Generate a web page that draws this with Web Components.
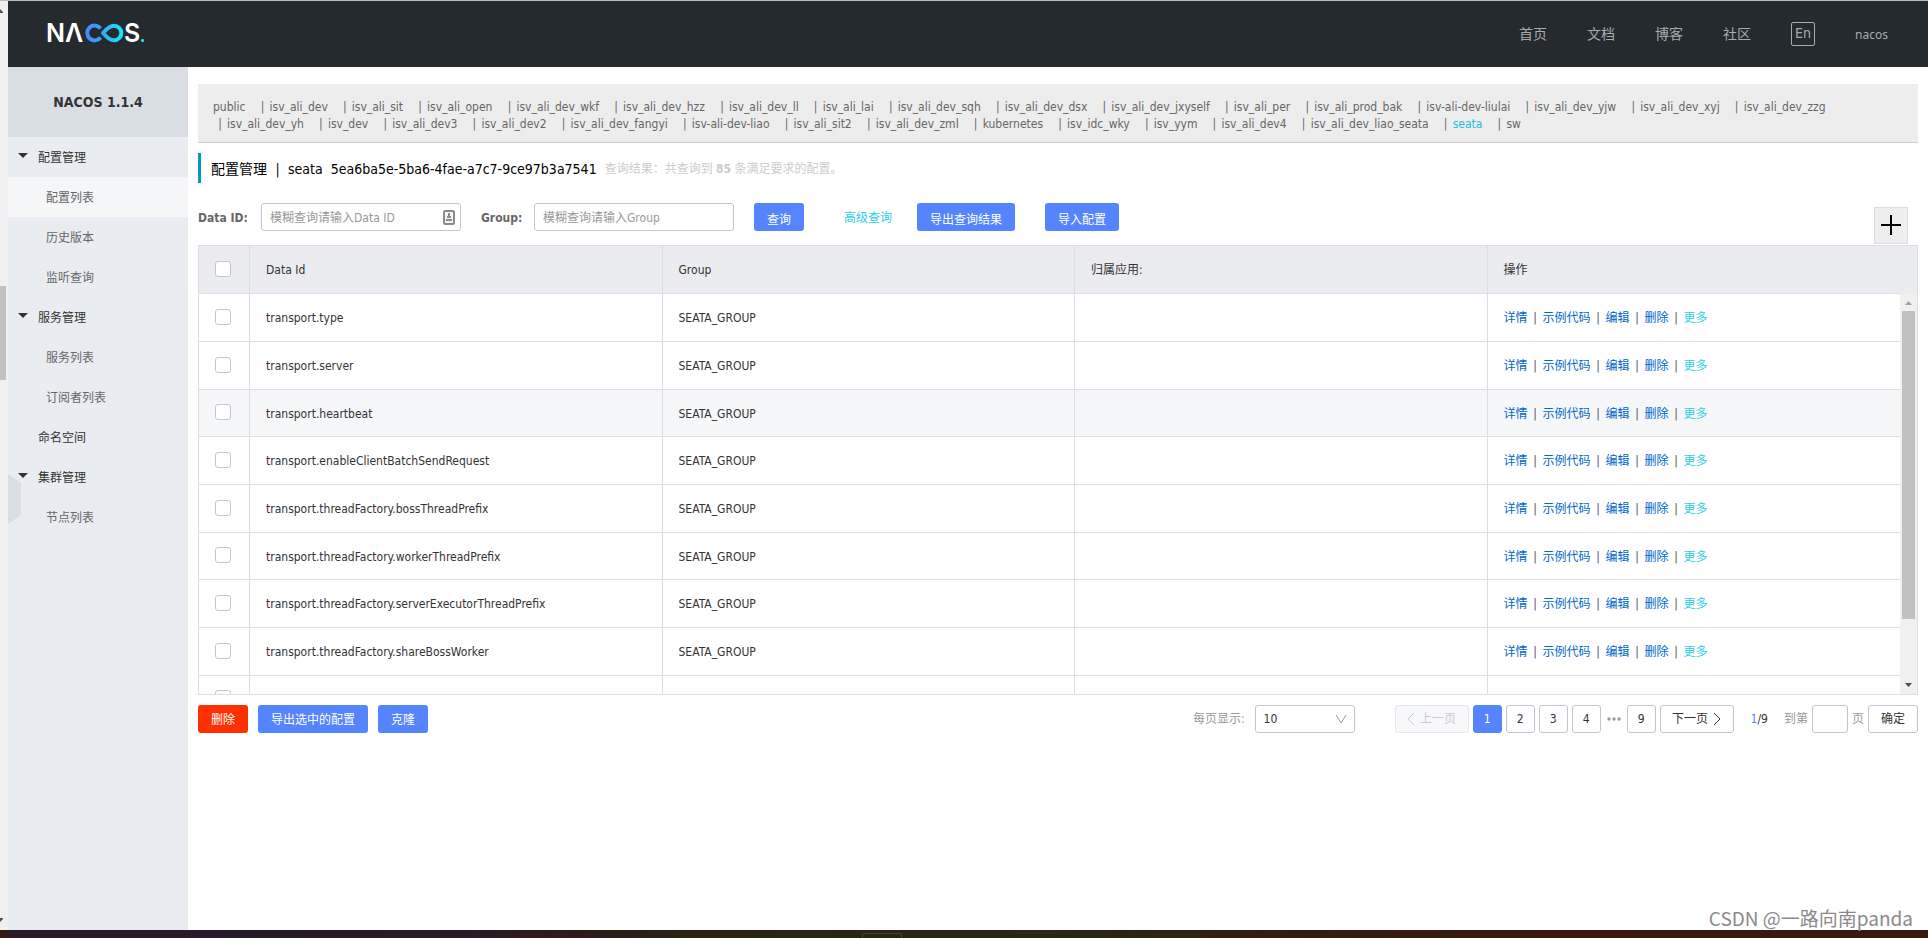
<!DOCTYPE html>
<html lang="zh-CN">
<head>
<meta charset="utf-8">
<title>NACOS</title>
<style>
  html, body { margin: 0; }
  body {
    font-family: "DejaVu Sans Condensed", "Noto Sans CJK SC", sans-serif;
    font-size: 12px;
    line-height: 17px;
    color: #333;
    background: #fff;
  }
</style>
</head>
<body>
<nacos-app>
  <nacos-header slot="header"></nacos-header>
  <nacos-sidebar slot="sidebar" version="NACOS 1.1.4"></nacos-sidebar>
  <nacos-namespaces current="seata"></nacos-namespaces>
  <nacos-title namespace="seata" namespace-id="5ea6ba5e-5ba6-4fae-a7c7-9ce97b3a7541" count="85">配置管理</nacos-title>
  <nacos-search></nacos-search>
  <nacos-config-table></nacos-config-table>
  <nacos-footer>
    <nacos-button kind="warning">删除</nacos-button>
    <nacos-button>导出选中的配置</nacos-button>
    <nacos-button>克隆</nacos-button>
    <nacos-pager slot="pager"></nacos-pager>
  </nacos-footer>
</nacos-app>

<script>
const BASE = `
  *, *::before, *::after { box-sizing: border-box; }
  a { color: inherit; text-decoration: none; }
  button, input, select { font: inherit; color: inherit; margin: 0; }
  ul { list-style: none; margin: 0; padding: 0; }
  svg { display: block; }
`;

class Base extends HTMLElement {
  connectedCallback() {
    if (this.shadowRoot) return;
    this.attachShadow({ mode: 'open' }).innerHTML =
      `<style>${BASE}${this.styles()}</style>${this.render()}`;
  }
  styles() { return ''; }
  render() { return '<slot></slot>'; }
}

customElements.define('nacos-app', class extends Base {
  styles() { return `
    :host { display: flex; flex-direction: column; min-height: 100vh; box-sizing: border-box; border-top: 1px solid #b9bcbc; position: relative; }
    .window { flex: 1; display: grid; grid-template-columns: 8px 1fr; }
    .edge { background: #f0f0f0; display: flex; flex-direction: column; align-items: flex-start; justify-content: space-between; padding: 8px 0; position: relative; }
    .thumb { position: absolute; left: 0; top: 285px; width: 6px; height: 94px; background: #c1c1c1; }
    .page { display: flex; flex-direction: column; }
    .body { flex: 1; display: grid; grid-template-columns: 180px 1fr; }
    main { padding: 17px 10px 0; min-width: 0; }
    .taskbar { height: 8px; background: linear-gradient(90deg, #371914 0 8px, #271b2a 8px, #2b1a28 22%, #2d1b1c 30%, #2b2412 36%, #2a2714 55%, #321e12 66%, #3a180f 80%, #38180f); display: flex; justify-content: center; align-items: flex-end; }
    .taskbar i { width: 40px; height: 5px; margin-right: 165px; border: 1px solid #46422e; border-bottom: 0; border-radius: 3px 3px 0 0; }
    .mark { position: absolute; right: 15px; bottom: 8px; font: 19px/24px "Noto Sans CJK SC", sans-serif; color: #8a8a8a; }
  `; }
  render() { return `
    <div class="window">
      <div class="edge">
        <svg width="3" height="4"><path d="M0 0l3 3v1H0z" fill="#505050"/></svg>
        <span class="thumb"></span>
        <svg width="3" height="4"><path d="M0 4l3-3V0H0z" fill="#505050"/></svg>
      </div>
      <div class="page">
        <slot name="header"></slot>
        <div class="body"><slot name="sidebar"></slot><main><slot></slot></main></div>
      </div>
    </div>
    <div class="taskbar"><i></i></div>
    <span class="mark">CSDN @一路向南panda</span>`; }
});

customElements.define('nacos-header', class extends Base {
  styles() { return `
    :host { display: flex; align-items: center; justify-content: space-between; height: 66px; padding: 0 40px 0 36px; box-sizing: border-box; background: #252a2f; color: #a8aaac; }
    .logo { margin-bottom: 2px; }
    nav { display: flex; align-items: center; gap: 40px; font-size: 14px; line-height: 24px; }
    button { width: 24px; height: 24px; padding: 0 0 2px; border: 1px solid #a8aaac; border-radius: 2px; background: none; line-height: 20px; text-align: center; }
    .user { font: 12px/24px "Noto Sans", sans-serif; padding-top: 2px; }
    text { font: 600 25px Inter, sans-serif; fill: #fff; }
  `; }
  render() { return `
    <a class="logo" href="#" aria-label="NACOS">
      <svg width="106" height="40" viewBox="-4 -10 106 40">
        <defs>
          <linearGradient id="l" gradientUnits="userSpaceOnUse" x1="36" y1="0" x2="56" y2="0"><stop stop-color="#4286ff"/><stop offset="1" stop-color="#35a7fb"/></linearGradient>
          <linearGradient id="r" gradientUnits="userSpaceOnUse" x1="54" y1="0" x2="75" y2="0"><stop stop-color="#30a9fa"/><stop offset="1" stop-color="#15e9f6"/></linearGradient>
        </defs>
        <text x="-2" y="19">N</text>
        <text x="17" y="19">Λ</text>
        <path d="M52.500 5.500A7.400 7.400 0 1 0 52.500 14.500" fill="none" stroke="url(#l)" stroke-width="4"/>
        <path d="M55 10C58 6.500 61 2.700 66 2.700A7.300 7.300 0 0 1 66 17.300C61 17.300 58 13.500 55 10Z" fill="none" stroke="url(#r)" stroke-width="4" stroke-linejoin="round"/>
        <text x="76" y="19">S</text>
        <rect x="93" y="16" width="3" height="3" rx="1" fill="#15dff0"/>
      </svg>
    </a>
    <nav>
      <a href="#">首页</a><a href="#">文档</a><a href="#">博客</a><a href="#">社区</a>
      <button type="button">En</button>
      <a class="user" href="#">nacos</a>
    </nav>`; }
});

const MENU = [
  ['配置管理', ['配置列表', '历史版本', '监听查询']],
  ['服务管理', ['服务列表', '订阅者列表']],
  ['命名空间', null],
  ['集群管理', ['节点列表']],
];

customElements.define('nacos-sidebar', class extends Base {
  styles() { return `
    :host { display: block; background: #e9edf2; position: relative; }
    h1 { margin: 0; height: 70px; font-size: 14px; line-height: 70px; text-align: center; background: #d9dee4; }
    a { display: flex; align-items: center; height: 40px; padding: 2px 0 0 30px; color: #333; }
    .group { padding-left: 10px; gap: 10px; }
    .group svg { margin-bottom: 5px; }
    .child { padding-left: 38px; color: #666; }
    .active { background: #f4f6f8; }
    .handle { position: absolute; left: 0; top: 407px; padding: 0; border: 0; background: none; }
    nav { position: relative; z-index: 1; }
  `; }
  render() {
    const items = MENU.map(([name, kids]) => kids
      ? `<li><a class="group" href="#"><svg width="10" height="5"><path d="M0 0h10L5 5z" fill="#333"/></svg>${name}</a><ul>${kids.map(k =>
          `<li><a class="child${k === '配置列表' ? ' active' : ''}" href="#">${k}</a></li>`).join('')}</ul></li>`
      : `<li><a href="#">${name}</a></li>`).join('');
    return `<h1>${this.getAttribute('version')}</h1>
      <button class="handle" type="button" aria-label="收起"><svg width="13" height="50"><path d="M0 0l13 9v32L0 50z" fill="#d9dee4"/></svg></button>
      <nav><ul>${items}</ul></nav>`;
  }
});

const SPACES = ('public isv_ali_dev isv_ali_sit isv_ali_open isv_ali_dev_wkf isv_ali_dev_hzz isv_ali_dev_ll isv_ali_lai ' +
  'isv_ali_dev_sqh isv_ali_dev_dsx isv_ali_dev_jxyself isv_ali_per isv_ali_prod_bak isv-ali-dev-liulai isv_ali_dev_yjw ' +
  'isv_ali_dev_xyj isv_ali_dev_zzg isv_ali_dev_yh isv_dev isv_ali_dev3 isv_ali_dev2 isv_ali_dev_fangyi isv-ali-dev-liao ' +
  'isv_ali_sit2 isv_ali_dev_zml kubernetes isv_idc_wky isv_yym isv_ali_dev4 isv_ali_dev_liao_seata seata sw').split(' ');

customElements.define('nacos-namespaces', class extends Base {
  styles() { return `
    :host { display: block; padding: 15px 15px 9px; background: #ededed; border-bottom: 1px solid #ccc; color: #666; }
    ul { display: flex; flex-wrap: wrap; }
    li { display: flex; padding-right: 10px; white-space: nowrap; }
    span { width: 14px; text-align: center; }
    .on { color: #21bfde; }
  `; }
  render() {
    const cur = this.getAttribute('current');
    return `<ul>${SPACES.map((s, i) =>
      `<li>${i ? '<span>|</span>' : ''}<a href="#"${s === cur ? ' class="on"' : ''}>${s}</a></li>`).join('')}</ul>`;
  }
});

customElements.define('nacos-title', class extends Base {
  styles() { return `
    :host { display: flex; align-items: center; height: 30px; margin-top: 10px; padding: 2px 0 0 10px; box-sizing: border-box; border-left: 3px solid #09c; color: #000; font-size: 14px; }
    h2 { display: flex; margin: 0; font-size: 14px; font-weight: 400; }
    .bar { width: 21px; text-align: center; }
    .id { margin-left: 8px; }
    small { margin-left: 8px; font-size: 12px; color: #ccc; }
  `; }
  render() { return `
    <h2><slot></slot><span class="bar">|</span><span>${this.getAttribute('namespace')}</span><span class="id">${this.getAttribute('namespace-id')}</span></h2>
    <small>查询结果：共查询到 <b>${this.getAttribute('count')}</b> 条满足要求的配置。</small>`; }
});

customElements.define('nacos-button', class extends Base {
  styles() { return `
    :host { display: block; }
    button { display: block; height: 28px; padding: 2px 13px 0; border: 0; border-radius: 3px; background: #5584ff; color: #fff; white-space: nowrap; }
    :host([kind="warning"]) button { background: #ff3000; }
  `; }
  render() { return `<button type="button"><slot></slot></button>`; }
});

customElements.define('nacos-search', class extends Base {
  styles() { return `
    :host { display: block; margin-top: 20px; }
    form { display: flex; align-items: flex-start; height: 42px; line-height: 30px; }
    label { font-weight: 700; color: #666; white-space: nowrap; }
    .id { width: 63px; }
    .group { width: 53px; margin-left: 20px; }
    .box { display: flex; align-items: center; width: 200px; height: 28px; padding: 0 5px 0 8px; border: 1px solid #c4c6cf; border-radius: 3px; }
    input { flex: 1; min-width: 0; border: 0; padding: 2px 0 0; outline: 0; background: none; }
    input::placeholder { color: #999; opacity: 1; }
    .query { margin: 0 40px 0 20px; }
    .more { color: #33cde5; margin-right: 25px; }
    .export { margin-right: 30px; }
    .add { display: flex; align-items: center; justify-content: center; width: 34px; height: 37px; padding: 0 0 2px; margin: 4px 10px 0 auto; border: 1px solid #ddd; background: #eee; }
  `; }
  render() { return `
    <form>
      <label class="id" for="dataId">Data ID:</label>
      <div class="box"><input id="dataId" type="text" placeholder="模糊查询请输入Data ID">
        <svg width="12" height="15" viewBox="0 0 12 15"><rect x="1" y="1" width="10" height="13" rx="1" fill="#f4f4f4" stroke="#8b8b8b" stroke-width="2"/><path d="M5 3h2v3h1v2H4V6h1zM3 9h6v2H3z" fill="#8b8b8b"/></svg>
      </div>
      <label class="group" for="group">Group:</label>
      <div class="box"><input id="group" type="text" placeholder="模糊查询请输入Group"></div>
      <nacos-button class="query">查询</nacos-button>
      <a class="more" href="#">高级查询</a>
      <nacos-button class="export">导出查询结果</nacos-button>
      <nacos-button>导入配置</nacos-button>
      <button class="add" type="button" aria-label="新建配置"><svg width="20" height="20"><path d="M10 0v20M0 10h20" stroke="#000" stroke-width="2"/></svg></button>
    </form>`; }
});

const CONFIGS = ['transport.type', 'transport.server', 'transport.heartbeat', 'transport.enableClientBatchSendRequest',
  'transport.threadFactory.bossThreadPrefix', 'transport.threadFactory.workerThreadPrefix',
  'transport.threadFactory.serverExecutorThreadPrefix', 'transport.threadFactory.shareBossWorker', ''];

customElements.define('nacos-config-table', class extends Base {
  styles() { return `
    :host { display: grid; grid-template-columns: 1fr 17px; height: 450px; box-sizing: border-box; border: 1px solid #dcdee3; }
    .view { overflow: hidden; }
    table { width: 100%; table-layout: fixed; border-collapse: separate; border-spacing: 0; }
    col.pick { width: 51px; }
    tr { height: 48px; }
    tbody tr:nth-child(3n) { height: 47px; }
    th, td { padding: 2px 16px 0; border: 0 solid #dcdee3; border-width: 0 1px 1px 0; text-align: left; font-weight: 400; }
    th:last-child, td:last-child { border-right: 0; }
    th { background: #ebecf0; }
    tr.hover td { background: #f5f7f9; }
    input { display: block; appearance: none; width: 16px; height: 16px; margin: 0 0 4px; border: 1px solid #c4c6cf; border-radius: 3px; background: #fff; }
    .ops { display: flex; color: #06c; }
    .ops span { width: 15px; text-align: center; color: #555; }
    .ops .more { color: #33cde5; }
    .rail { display: flex; flex-direction: column; align-items: center; background: #f0f0f0; padding-bottom: 7px; }
    .cap { align-self: stretch; height: 48px; background: #ebecf0; margin-bottom: 7px; }
    .thumb { width: 13px; height: 308px; margin: 6px 0 auto; background: #c1c1c1; }
  `; }
  render() {
    const ops = ['详情', '示例代码', '编辑', '删除'].map(o => `<a href="#">${o}</a><span>|</span>`).join('') + '<a class="more" href="#">更多</a>';
    const rows = CONFIGS.map((id, i) => `<tr${i === 2 ? ' class="hover"' : ''}>
      <td><input type="checkbox" aria-label="选择 ${id}"></td><td>${id}</td><td>${id ? 'SEATA_GROUP' : ''}</td><td></td>
      <td>${id ? `<div class="ops">${ops}</div>` : ''}</td></tr>`).join('');
    return `<div class="view"><table>
        <colgroup><col class="pick"><col><col><col><col></colgroup>
        <thead><tr><th><input type="checkbox" aria-label="全选"></th><th>Data Id</th><th>Group</th><th>归属应用:</th><th>操作</th></tr></thead>
        <tbody>${rows}</tbody>
      </table></div>
      <div class="rail">
        <span class="cap"></span>
        <svg width="7" height="4"><path d="M0 4h7L3.500 0z" fill="#a3a3a3"/></svg>
        <span class="thumb"></span>
        <svg width="7" height="4"><path d="M0 0h7L3.500 4z" fill="#505050"/></svg>
      </div>`;
  }
});

customElements.define('nacos-footer', class extends Base {
  styles() { return `
    :host { display: flex; gap: 10px; margin-top: 10px; }
    .pager { margin-left: auto; }
  `; }
  render() { return `<slot></slot><div class="pager"><slot name="pager"></slot></div>`; }
});

customElements.define('nacos-pager', class extends Base {
  styles() { return `
    :host { display: flex; align-items: center; gap: 4px; height: 28px; color: #999; }
    .size { position: relative; width: 100px; margin: 0 36px 0 6px; color: #333; }
    select { display: block; appearance: none; width: 100%; height: 28px; padding: 0 8px; border: 1px solid #c4c6cf; border-radius: 3px; background: #fff; }
    .size svg { position: absolute; right: 8px; top: 9px; pointer-events: none; }
    button { display: flex; align-items: center; justify-content: center; gap: 5px; width: 29px; height: 28px; padding: 0; border: 1px solid #c4c6cf; border-radius: 3px; background: #fff; color: #333; white-space: nowrap; }
    .step { width: 74px; }
    .ok { width: 50px; }
    button:disabled { background: #f7f8fa; border-color: #e6e7eb; color: #ccc; }
    button.on { background: #5584ff; border-color: #5584ff; color: #fff; }
    .dots { width: 18px; display: flex; justify-content: center; }
    .count { margin: 0 12px 0 13px; color: #333; }
    .count em { font-style: normal; color: #5584ff; }
    input { width: 36px; height: 28px; padding: 0 6px; border: 1px solid #c4c6cf; border-radius: 3px; }
  `; }
  render() {
    const page = n => `<button type="button"${n === 1 ? ' class="on" aria-current="page"' : ''}>${n}</button>`;
    return `
      <label for="size">每页显示:</label>
      <div class="size"><select id="size"><option>10</option><option>20</option></select>
        <svg width="12" height="10" fill="none" stroke="#999"><path d="M1 1l5 8 5-8"/></svg></div>
      <button class="step" type="button" disabled><svg width="8" height="14" fill="none" stroke="currentColor"><path d="M7 1L1 7l6 6"/></svg>上一页</button>
      ${[1, 2, 3, 4].map(page).join('')}
      <span class="dots"><svg width="14" height="4" fill="#999"><circle cx="2" cy="2" r="1.700"/><circle cx="7" cy="2" r="1.700"/><circle cx="12" cy="2" r="1.700"/></svg></span>
      ${page(9)}
      <button class="step" type="button">下一页<svg width="8" height="14" fill="none" stroke="currentColor"><path d="M1 1l6 6-6 6"/></svg></button>
      <span class="count"><em>1</em>/9</span>
      <label for="jump">到第</label><input id="jump" type="text"><span>页</span>
      <button class="ok" type="button">确定</button>`;
  }
});
</script>
</body>
</html>
